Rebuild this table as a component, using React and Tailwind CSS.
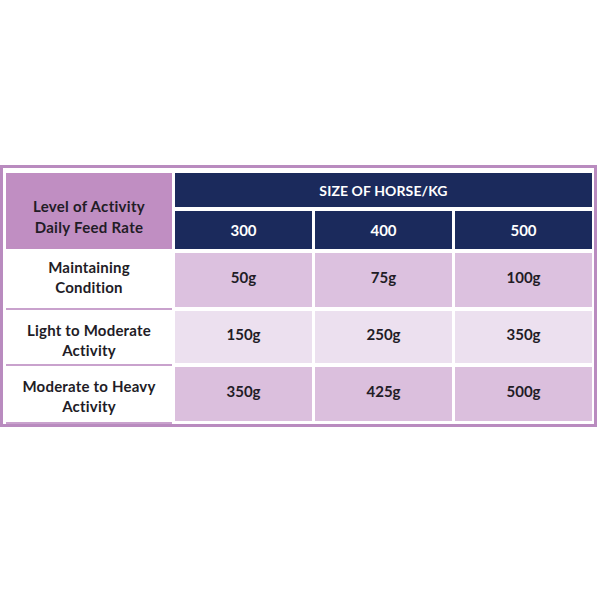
const navy = 'bg-[#1b2a5c] text-white';

const rows = [
  { label: ['Maintaining', 'Condition'], values: ['50g', '75g', '100g'], bg: 'bg-[#dcc1df]', shift: 'pb-[6px]' },
  { label: ['Light to Moderate', 'Activity'], values: ['150g', '250g', '350g'], bg: 'bg-[#ece0ef]', shift: 'pt-[6px]' },
  { label: ['Moderate to Heavy', 'Activity'], values: ['350g', '425g', '500g'], bg: 'bg-[#dbbfdd]', shift: 'pt-[4px]' },
];

export default function App() {
  return (
    <div className="w-[600px] h-[600px] bg-white pt-[165px] font-['Lato','Open_Sans',sans-serif] text-[#221c26]">
      <div className="w-[597px] border-[3px] border-[#b98bbf] bg-white px-[3px] pt-[5px] pb-[3px]">
        <div className="grid grid-cols-[166px_137px_137px_137px] grid-rows-[34px_38px_54px_52px_54px] gap-x-[3px] gap-y-[4px]">
          <div className="row-span-2 bg-[#c08ec2] flex flex-col items-center justify-center pt-[12px] text-[15px] font-bold leading-[21px] tracking-[0.3px]">
            <span>Level of Activity</span>
            <span>Daily Feed Rate</span>
          </div>
          <div className={`col-span-3 ${navy} flex items-center justify-center text-[14px] font-bold tracking-[0.1px]`}>
            SIZE OF HORSE/KG
          </div>
          {['300', '400', '500'].map((s) => (
            <div key={s} className={`${navy} flex items-center justify-center text-[15px] font-bold`}>
              {s}
            </div>
          ))}
          {rows.map((r) => (
            <Row key={r.label[0]} row={r} />
          ))}
        </div>
      </div>
    </div>
  );
}

function Row({ row }) {
  return (
    <>
      <div className={`relative flex flex-col items-center justify-center ${row.shift} text-[15px] font-bold leading-[20px] tracking-[0.2px]`}>
        <span>{row.label[0]}</span>
        <span>{row.label[1]}</span>
        <div className="absolute left-0 right-0 -bottom-[3px] h-[2px] bg-[#c9a2cd]" />
      </div>
      {row.values.map((v, i) => (
        <div key={i} className={`${row.bg} flex items-center justify-center pb-[5px] text-[15px] font-bold`}>
          {v}
        </div>
      ))}
    </>
  );
}
